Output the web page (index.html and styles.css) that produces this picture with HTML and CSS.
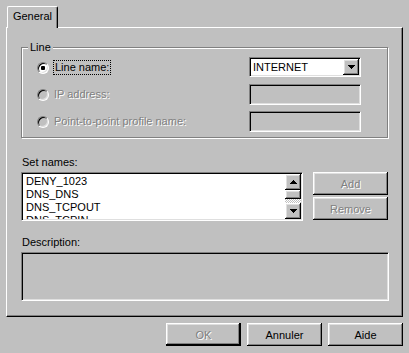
FILE: index.html
```html
<!DOCTYPE html>
<html>
<head>
<title>Line properties</title>
<link rel="stylesheet" href="styles.css">
</head>
<body>

  <div class="dialog">

    <div class="tabs">
      <div class="tab">General</div>
    </div>

    <div class="panel">

      <div class="group">
        <div class="group-title">Line</div>
        <div class="line-grid">

          <div class="option">
            <span class="radio checked"></span>
            <span class="focus">Line name:</span>
          </div>
          <div class="combo sunken">
            <span class="combo-value">INTERNET</span>
            <span class="drop-btn raised">
              <svg width="7" height="4" viewBox="0 0 7 4" shape-rendering="crispEdges"><polygon points="0,0 7,0 4,4 3,4" fill="#000"/></svg>
            </span>
          </div>

          <div class="option disabled">
            <span class="radio"></span>
            <span class="option-text">IP address:</span>
          </div>
          <div class="field sunken"></div>

          <div class="option disabled">
            <span class="radio"></span>
            <span class="option-text">Point-to-point profile name:</span>
          </div>
          <div class="field sunken"></div>

        </div>
      </div>

      <div class="label set-label">Set names:</div>
      <div class="sets">
        <div class="listbox sunken">
          <ul class="items">
            <li>DENY_1023</li>
            <li>DNS_DNS</li>
            <li>DNS_TCPOUT</li>
            <li>DNS_TCPIN</li>
          </ul>
          <div class="scrollbar">
            <span class="sb-btn raised">
              <svg width="7" height="4" viewBox="0 0 7 4" shape-rendering="crispEdges"><polygon points="3,0 4,0 7,4 0,4" fill="#000"/></svg>
            </span>
            <span class="sb-thumb raised"></span>
            <span class="sb-track"></span>
            <span class="sb-btn raised">
              <svg width="7" height="4" viewBox="0 0 7 4" shape-rendering="crispEdges"><polygon points="0,0 7,0 4,4 3,4" fill="#000"/></svg>
            </span>
          </div>
        </div>
        <div class="side-buttons">
          <button class="btn raised" disabled>Add</button>
          <button class="btn raised" disabled>Remove</button>
        </div>
      </div>

      <div class="label desc-label">Description:</div>
      <div class="desc sunken"></div>

    </div>

    <div class="actions">
      <button class="btn raised default" disabled>OK</button>
      <button class="btn raised">Annuler</button>
      <button class="btn raised">Aide</button>
    </div>

  </div>

</body>
</html>
```

FILE: styles.css
```css
* {
  box-sizing: border-box;
}

body {
  margin: 0;
  background: #c0c0c0;
  font-family: "Liberation Sans", Arial, sans-serif;
  font-size: 11px;
  line-height: 13px;
  color: #000;
}

.dialog {
  padding: 6px 6px 0 6px;
}

/* 3d edges, windows classic */
.sunken {
  border: 1px solid;
  border-color: #808080 #fff #fff #808080;
  box-shadow: inset 1px 1px 0 #000, inset -1px -1px 0 #dfdfdf;
}

.raised {
  background: #c0c0c0;
  box-shadow: inset -1px -1px 0 #000, inset 1px 1px 0 #fff, inset -2px -2px 0 #808080, inset 2px 2px 0 #dfdfdf;
}

/* tab */
.tabs {
  display: flex;
  padding-left: 1px;
}

.tab {
  position: relative;
  z-index: 1;
  width: 51px;
  height: 22px;
  margin-bottom: -1px;
  padding-top: 3px;
  text-align: center;
  background: #c0c0c0;
  border-top: 1px solid #fff;
  border-left: 1px solid #fff;
  border-right: 1px solid #000;
  border-radius: 2px 2px 0 0;
  box-shadow: inset -1px 0 0 #808080;
}

.panel {
  height: 290px;
  padding: 19px 13px 0 14px;
  border: 1px solid;
  border-color: #fff #000 #000 #fff;
  box-shadow: inset -1px -1px 0 #808080;
}

/* line group */
.group {
  width: 367px;
  padding: 0 26px 5px 15px;
  border: 1px solid #808080;
  box-shadow: 1px 1px 0 #fff, inset 1px 1px 0 #fff;
}

.group-title {
  width: fit-content;
  margin: -7px 0 0 -9px;
  padding: 0 2px;
  background: #c0c0c0;
}

.line-grid {
  display: grid;
  grid-template-columns: 1fr 112px;
  grid-auto-rows: 21px;
  row-gap: 6px;
  margin-top: 3px;
}

.option {
  display: flex;
  align-items: center;
}

.option-text {
  margin-left: 5px;
}

.disabled {
  color: #808080;
  text-shadow: 1px 1px 0 #fff;
}

.radio {
  position: relative;
  width: 12px;
  height: 12px;
  border-radius: 50%;
  border: 1px solid;
  border-color: #808080 #fff #fff #808080;
  box-shadow: inset 1px 1px 0 #000, inset -1px -1px 0 #dfdfdf;
  background: #c0c0c0;
}

.radio.checked {
  background: #fff;
}

.radio.checked::after {
  content: "";
  position: absolute;
  left: 3px;
  top: 3px;
  width: 4px;
  height: 4px;
  border-radius: 1px;
  background: #000;
}

.focus {
  margin-left: 4px;
  padding: 0 1px;
  border: 1px dotted #000;
}

.combo {
  display: flex;
  align-items: stretch;
  height: 20px;
  padding: 1px;
  background: #fff;
}

.combo-value {
  flex: 1;
  padding: 2px 0 0 2px;
}

.drop-btn,
.sb-btn {
  display: flex;
  align-items: center;
  justify-content: center;
  width: 16px;
  height: 16px;
}

.field {
  background: #c0c0c0;
}

/* set names */
.label {
  padding-left: 1px;
}

.set-label {
  margin-top: 18px;
}

.sets {
  display: flex;
  gap: 10px;
  margin-top: 3px;
}

.listbox {
  display: flex;
  width: 282px;
  height: 49px;
  padding: 1px;
  background: #fff;
  overflow: hidden;
}

.items {
  flex: 1;
  margin: 0;
  padding: 1px 0 0 3px;
  list-style: none;
  overflow: hidden;
}

.scrollbar {
  display: flex;
  flex-direction: column;
  width: 16px;
}

.sb-thumb {
  height: 9px;
}

.sb-track {
  flex: 1;
  background: repeating-conic-gradient(#fff 0 25%, #c0c0c0 0 50%) 0 0 / 2px 2px;
}

.side-buttons {
  display: flex;
  flex-direction: column;
  gap: 2px;
}

.btn {
  width: 75px;
  height: 23px;
  padding: 0;
  border: 0;
  font-family: "Liberation Sans", Arial, sans-serif;
  font-size: 11px;
  font-weight: normal;
  color: #000;
}

.btn:disabled {
  color: #808080;
  text-shadow: 1px 1px 0 #fff;
}

.btn.default {
  box-shadow: inset -1px -1px 0 #000, inset -2px -2px 0 #000, inset 1px 1px 0 #fff, inset -3px -3px 0 #808080, inset 2px 2px 0 #dfdfdf;
}

.desc-label {
  margin-top: 15px;
}

.desc {
  width: 368px;
  height: 49px;
  margin-top: 3px;
  background: #c0c0c0;
}

.actions {
  display: flex;
  justify-content: flex-end;
  gap: 6px;
  margin-top: 6px;
}
```
